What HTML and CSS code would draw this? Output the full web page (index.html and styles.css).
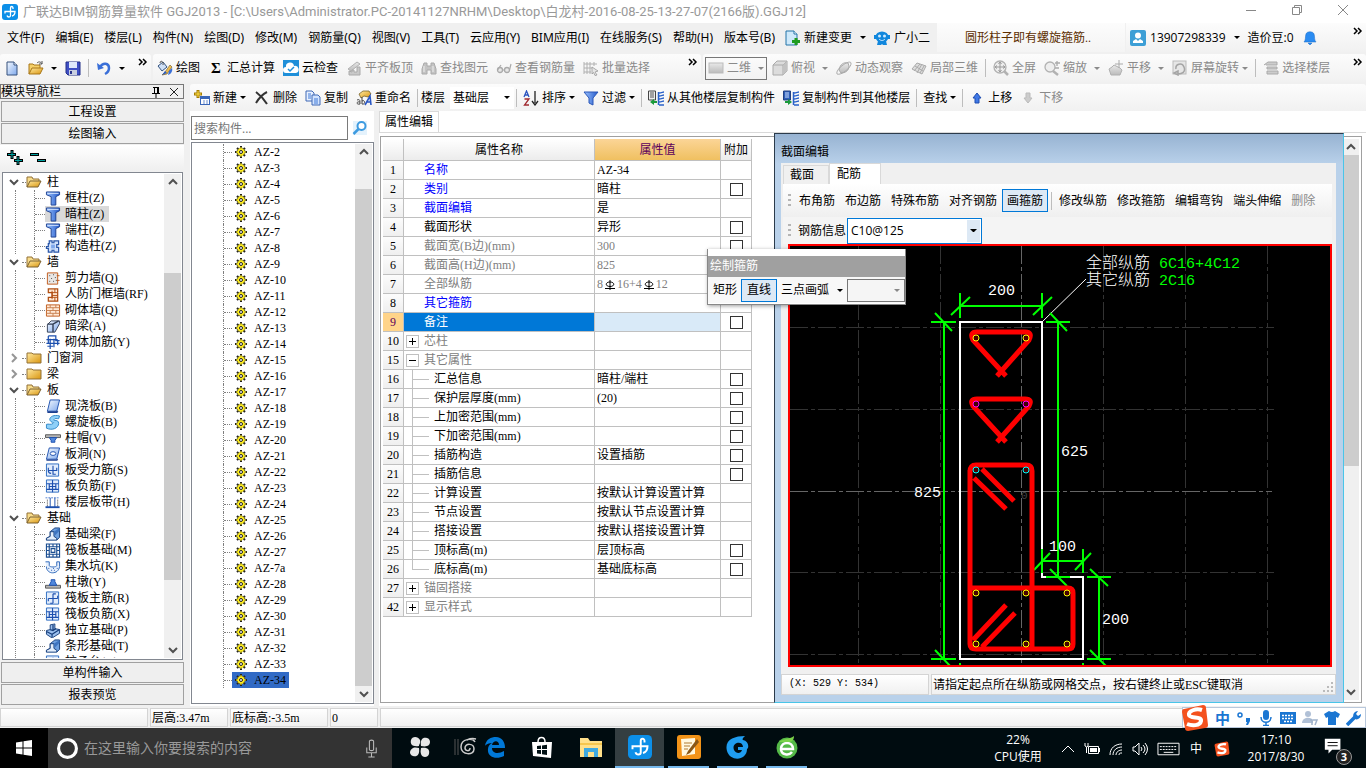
FILE: index.html
```html
<!DOCTYPE html>
<html lang="zh-CN">
<head>
  <meta charset="UTF-8">
  <title>广联达BIM钢筋算量软件 GGJ2013</title>
  <link rel="stylesheet" href="styles.css">
</head>
<body>

<!-- icon set, all on a 16x16 grid -->
<svg class="sprite" aria-hidden="true">
  <defs>
    <linearGradient id="gGold" x1="0" y1="0" x2="1" y2="1"><stop offset="0" stop-color="#ffe9a0"/><stop offset="1" stop-color="#d9950f"/></linearGradient>
    <linearGradient id="gBlue" x1="0" y1="0" x2="1" y2="1"><stop offset="0" stop-color="#f4f9ff"/><stop offset="1" stop-color="#7fa9ec"/></linearGradient>
    <linearGradient id="gGrey" x1="0" y1="0" x2="0" y2="1"><stop offset="0" stop-color="#e9e9e9"/><stop offset="1" stop-color="#bbb"/></linearGradient>
    <linearGradient id="gBlade" x1="0" y1="0" x2="1" y2="0"><stop offset="0" stop-color="#9cc4ff"/><stop offset="1" stop-color="#2358c9"/></linearGradient>
  </defs>
  <symbol id="logo" viewBox="0 0 16 16"><rect width="16" height="16" rx="3" fill="#0c8fe8"/><path d="M11 5V4c0-2-2.500-2-2.500 0v7.500c0 2-3 2-3.500 0M3 9.500v-2h10c0 2.500-1 4-3 4.500" fill="none" stroke="#fff" stroke-width="1.300"/></symbol>
  <symbol id="new" viewBox="0 0 16 16"><path d="M3 2h7l3 3v10H3z" fill="url(#gBlue)" stroke="#35507c"/><path d="M10 2v3h3" fill="#fff" stroke="#35507c"/></symbol>
  <symbol id="open" viewBox="0 0 16 16"><path d="M1 14V4h4l1 1h6v3" fill="#f5d069" stroke="#a87718"/><path d="M1 14l3-6h11l-3 6z" fill="url(#gGold)" stroke="#a87718"/><path d="M9 3c2-2 4-1 5 1M14 1v3h-3" fill="none" stroke="#555"/></symbol>
  <symbol id="save" viewBox="0 0 16 16"><path d="M1 2h14v13H3l-2-2z" fill="#3f4fc4" stroke="#222f87"/><path d="M4 2h8v6H4z" fill="#dfe8fb"/><path d="M4 10h8v5H4z" fill="#c9cfe0"/><path d="M5 11h2v3H5z" fill="#2a348c"/></symbol>
  <symbol id="undo" viewBox="0 0 16 16"><path d="M4 7c3-5 9-4 9 1 0 3-2 5-4 6" fill="none" stroke="#3a6fd8" stroke-width="2.500"/><path d="M1 3l1 7 6-2z" fill="#3a6fd8"/></symbol>
  <symbol id="draw" viewBox="0 0 16 16"><path d="M1 6l5-4 4 5-5 4z" fill="#cfe0f6" stroke="#33527f"/><path d="M3 3c0-3 4-2 3 2" fill="none" stroke="#555"/><path d="M13 5l-5 7-3 3 5-1 5-7z" fill="url(#gGold)" stroke="#6a531b" stroke-width=".6"/><path d="M8 11l-3 4 5-2z" fill="#2d5fc2"/><path d="M15 8c1 3-1 6-4 7l1-4z" fill="#3a6fd8"/></symbol>
  <symbol id="cloud" viewBox="0 0 16 16"><rect width="16" height="16" fill="#1e8fd9"/><path d="M3 13a3 3 0 010-6 4 4 0 018-1 3.500 3.500 0 012 7z" fill="#fff"/><path d="M5 9l2 2 4-4" fill="none" stroke="#1e8fd9" stroke-width="1.500"/></symbol>
  <symbol id="align" viewBox="0 0 16 16"><path d="M2 9l9-7 3 2-9 7z" fill="url(#gGrey)" stroke="#b2b2b2"/><path d="M3 11v4h11V7h-3v5H8v-2H6v2z" fill="#c9c9c9" stroke="#aaa"/></symbol>
  <symbol id="binoc" viewBox="0 0 16 16"><path d="M3 3h3v3h4V3h3l2 6v5h-5v-4H6v4H1V9z" fill="#c3c3c3" stroke="#aaa"/><path d="M3 6v6M12 6v6" stroke="#eee"/></symbol>
  <symbol id="glass" viewBox="0 0 16 16"><circle cx="4" cy="10" r="2.500" fill="#e8e8e8" stroke="#aaa" stroke-width="1.300"/><circle cx="11" cy="10" r="2.500" fill="#e8e8e8" stroke="#aaa" stroke-width="1.300"/><path d="M1.500 10L5 5M13.500 10L15 4M6.500 10h2" fill="none" stroke="#aaa" stroke-width="1.200"/></symbol>
  <symbol id="batch" viewBox="0 0 16 16"><path d="M1 2v12M4 2v12M7 2v12M1 4h13M1 8h8M1 12h7M11 2v4" stroke="#b0b0b0" fill="none"/><path d="M9 7l6 4-3 1 2 3-2 .5-1.500-3L9 14z" fill="#e6e6e6" stroke="#999" stroke-width=".8"/></symbol>
  <symbol id="rectg" viewBox="0 0 16 16"><rect x="1" y="3" width="14" height="10" fill="url(#gGrey)" stroke="#bbb"/></symbol>
  <symbol id="cube" viewBox="0 0 16 16"><path d="M1 5l4-4h10v10l-4 4H1z" fill="#dcdcdc" stroke="#aaa"/><path d="M1 5h10v10M11 5l4-4" fill="none" stroke="#aaa"/><path d="M11 5l4-4v10l-4 4z" fill="#c2c2c2"/></symbol>
  <symbol id="orbit" viewBox="0 0 16 16"><path d="M3 10c1-6 5-8 9-7l1 3c0 5-4 7-8 7z" fill="url(#gGrey)" stroke="#aaa"/><path d="M1 14C-1 9 14-1 15 3S5 16 1 14z" fill="none" stroke="#aaa"/></symbol>
  <symbol id="part3d" viewBox="0 0 16 16"><path d="M1 9l5-6 9 3-4 8z" fill="#ddd" stroke="#aaa"/><path d="M4 6l8 5M6 13l5-9M3 11l6-7M9 13l4-7" stroke="#aaa" fill="none"/></symbol>
  <symbol id="full" viewBox="0 0 16 16"><circle cx="7" cy="7" r="6" fill="#eee" stroke="#b2b2b2" stroke-width="1.300"/><path d="M7 2v10M2 7h10M5.500 4L7 2l1.500 2M5.500 10L7 12l1.500-2M4 5.500L2 7l2 1.500M10 5.500L12 7l-2 1.500" stroke="#999" fill="none"/><path d="M11 11l4 4" stroke="#b2b2b2" stroke-width="2.500"/></symbol>
  <symbol id="zoomi" viewBox="0 0 16 16"><circle cx="6" cy="7" r="5" fill="#eee" stroke="#b2b2b2" stroke-width="1.300"/><path d="M9 11l5 4" stroke="#b2b2b2" stroke-width="2.500"/><path d="M13 1v5M11 3h5M11 8h4" stroke="#aaa" stroke-width="1.300"/></symbol>
  <symbol id="pan" viewBox="0 0 16 16"><path d="M3 15l-2-6 3-2 2-2 6 3 2 2-2 5z" fill="url(#gGrey)" stroke="#b0b0b0"/><path d="M11 0v8M7 4h8" stroke="#aaa"/></symbol>
  <symbol id="rot" viewBox="0 0 16 16"><rect x="1" y="1" width="13" height="13" fill="#e6e6e6" stroke="#bbb"/><path d="M4 9c-1-5 6-7 8-2s-2 7-6 7M6 11v4l-4-2z" fill="none" stroke="#a5a5a5" stroke-width="1.500"/></symbol>
  <symbol id="floors" viewBox="0 0 16 16"><path d="M1 5l4-3h9v3H3M4 7h10v2H4zM4 11h11v3H4z" fill="#ccc" stroke="#aaa"/></symbol>
  <symbol id="change" viewBox="0 0 16 16"><path d="M2 1h8l3 3v11H2z" fill="#cfe9fa" stroke="#2474a8"/><path d="M10 1v3h3" fill="#fff" stroke="#2474a8"/><path d="M12 8v7M8 11.500h8" stroke="#1f9c1f" stroke-width="3"/></symbol>
  <symbol id="robot" viewBox="0 0 16 16"><ellipse cx="8" cy="7" rx="6.500" ry="5.500" fill="#1187dd"/><path d="M0 5h3v4H0zM13 5h3v4h-3zM4 11h8l1 4H9l-1-1-1 1H3z" fill="#1187dd"/><circle cx="5.500" cy="6" r="1.500" fill="#cfeaff"/><circle cx="10.500" cy="6" r="1.500" fill="#cfeaff"/><path d="M5 9c2 2 4 2 6 0" fill="none" stroke="#cfeaff"/></symbol>
  <symbol id="user" viewBox="0 0 16 16"><rect width="16" height="16" rx="2" fill="#3d9fd6"/><circle cx="8" cy="5.500" r="3" fill="#fff"/><path d="M3 13v-2l3-2 2 2 2-2 3 2v2z" fill="#fff"/></symbol>
  <symbol id="bell" viewBox="0 0 16 16"><path d="M2 12c2-2 1-5 2-8 1-3 7-3 8 0 1 3 0 6 2 8zM6 13h4l-2 2z" fill="#2b8cf2" stroke="#1768c4" stroke-width=".5"/></symbol>
  <symbol id="add" viewBox="0 0 16 16"><path d="M4 0v8M0 4h8" stroke="#a67c00" stroke-width="3"/><path d="M4 1v6M1 4h6" stroke="#ffe14a"/><rect x="6.500" y="6.500" width="9" height="8" fill="#fff" stroke="#3a66b8"/><path d="M7 8h8" stroke="#3a66b8" stroke-width="2"/><path d="M9 11h2M12 11h2M9 13h2M12 13h2" stroke="#6c8fd0"/></symbol>
  <symbol id="del" viewBox="0 0 16 16"><path d="M2 2c4 3 8 7 11 12M13 2C9 4 5 8 2 13" fill="none" stroke="#333" stroke-width="2"/></symbol>
  <symbol id="copy" viewBox="0 0 16 16"><path d="M1 1h6l2 2v8H1z" fill="#e7f0ff" stroke="#3f68b5"/><path d="M7 5h6l2 2v8H7z" fill="#d3e4ff" stroke="#3f68b5"/><path d="M3 4h3M3 6h3M3 8h3M9 9h4M9 11h4M9 13h4" stroke="#3f78d6"/></symbol>
  <symbol id="rename" viewBox="0 0 16 16"><path d="M3 4l4-3h6l2 3-3 3-4-1-3 2z" fill="url(#gGold)" stroke="#665018" stroke-width=".7"/><path d="M1 10c3-1 3 0 3 4-4 1-4-3 0-2M6 7v7c4 1 3-5 0-3" fill="none" stroke="#444" stroke-width="1"/><path d="M9 15l5-9 1 9M11 12h4" fill="none" stroke="#2a57c4" stroke-width="1.600"/></symbol>
  <symbol id="sort" viewBox="0 0 16 16"><path d="M1 7l2.500-6L6 7M2 5h3" fill="none" stroke="#2b54c0" stroke-width="1.300"/><path d="M1.500 9H6l-4.500 6H6" fill="none" stroke="#a02a30" stroke-width="1.300"/><path d="M12 1v12M9 11l3 4 3-4" fill="none" stroke="#222" stroke-width="1.300"/></symbol>
  <symbol id="filter" viewBox="0 0 16 16"><path d="M1 2h14L10 8v7l-4-2V8z" fill="url(#gBlade)" stroke="#2a57b8"/></symbol>
  <symbol id="cpfrom" viewBox="0 0 16 16"><path d="M.5 1h7v9h-7z" fill="#eee" stroke="#444"/><path d="M2 3h4M2 5h4M2 7h4" stroke="#555"/><path d="M11 3c2 0 4-1 5-1M11 6c2 0 4-1 5-1M11 9c2 0 4-1 5-1M11 12c2 0 4-1 5-1M11 15h5" stroke="#2a62c9" stroke-width="1.500" fill="none"/><path d="M10.500 2v13" stroke="#2a62c9" stroke-width="1.500"/><path d="M2 12l4-3v2h3v2H6v2z" fill="#1a9a3a"/></symbol>
  <symbol id="cpto" viewBox="0 0 16 16"><path d="M.5 1h7v9h-7z" fill="#2f5fb8" stroke="#223f80"/><path d="M2 3h4M2 5h4M2 7h4" stroke="#cfe0ff"/><path d="M11 3c2 0 4-1 5-1M11 6c2 0 4-1 5-1M11 9c2 0 4-1 5-1M11 12c2 0 4-1 5-1M11 15h5" stroke="#2a62c9" stroke-width="1.500" fill="none"/><path d="M10.500 2v13" stroke="#2a62c9" stroke-width="1.500"/><path d="M9 12L5 9v2H2v2h3v2z" fill="#1a9a3a"/></symbol>
  <symbol id="up" viewBox="0 0 16 16"><path d="M8 3l4 5h-2v5H6V8H4z" fill="#3f78e6" stroke="#1e4db0"/></symbol>
  <symbol id="down" viewBox="0 0 16 16"><path d="M8 13l4-5h-2V3H6v5H4z" fill="#ccc" stroke="#bbb"/></symbol>
  <symbol id="find" viewBox="0 0 16 16"><rect width="14" height="14" x="1" y="1" fill="#e4f2fc"/><circle cx="9.500" cy="6" r="4" fill="#fff" stroke="#3d9be0" stroke-width="2"/><path d="M6.500 9l-5 5" stroke="#3d9be0" stroke-width="2.500"/></symbol>
  <!-- tree -->
  <symbol id="fopen" viewBox="0 0 16 16"><path d="M1 13V3h5l1 2h6v3" fill="#f8dc8b" stroke="#927037"/><path d="M1 13l3-6h11l-3 6z" fill="url(#gGold)" stroke="#7b6130"/></symbol>
  <symbol id="fshut" viewBox="0 0 16 16"><path d="M1 3h5l1 1h8v9H1z" fill="url(#gGold)" stroke="#927037"/></symbol>
  <symbol id="col" viewBox="0 0 16 16"><path d="M1 1h14v3l-4 2v9H6V6L1 4z" fill="url(#gBlade)" stroke="#1c3f8f"/><path d="M2 2.500h12" stroke="#dbe9ff"/></symbol>
  <symbol id="gzz" viewBox="0 0 16 16"><path d="M4 2h3v2h2V2h5v4h-2v3h2v5H9v-2H7v2H3v-4H1V8h2V5h1z" fill="#cfe0fb" stroke="#2a56a8" stroke-width="1.300"/><path d="M6 6h4v4H6z" fill="#7fa9ec"/></symbol>
  <symbol id="wall" viewBox="0 0 16 16"><path d="M2 2h11v12H2z" fill="#e8e6e4" stroke="#c05a1a"/><path d="M4 5h1M8 4h1M6 8h1M10 7h1M4 11h1M8 11h1M11 10h1" stroke="#444"/><path d="M12 5h3M12 10h3" stroke="#c05a1a"/></symbol>
  <symbol id="rfw" viewBox="0 0 16 16"><path d="M3 2h10v13H3v-4h4V6H3z" fill="#ffe8d2" stroke="#b04c10" stroke-width="1.300"/><path d="M7 4v9M10 2v4M10 11v4M7 6h6M7 9h6M7 11h6" fill="none" stroke="#b04c10"/></symbol>
  <symbol id="brick" viewBox="0 0 16 16"><path d="M1 2h14v12H1z" fill="#ffe9d6" stroke="#c05a1a"/><path d="M1 5h14M1 8h14M1 11h14M5 2v3M11 2v3M8 5v3M5 8v3M11 8v3M8 11v3" stroke="#c98050"/></symbol>
  <symbol id="beam" viewBox="0 0 16 16"><path d="M2 6l4-4h9v3l-5 9H2z" fill="url(#gBlue)" stroke="#333f55"/><path d="M2 5.500h6V14M8 5.500L14 2" fill="none" stroke="#333f55" stroke-width="1.500"/></symbol>
  <symbol id="qjj" viewBox="0 0 16 16"><path d="M3 1h8v5h4M1 5h12M1 9h14M5 4v11M9 4v9M3 1v8M13 6v5M2 12h6" fill="none" stroke="#1c4fae" stroke-width="1.300"/></symbol>
  <symbol id="slab" viewBox="0 0 16 16"><path d="M5 1h10l-3 12H2z" fill="url(#gBlue)" stroke="#1c4fae"/><path d="M2 14h10l1-1" fill="none" stroke="#1c3f8f" stroke-width="2"/></symbol>
  <symbol id="spiral" viewBox="0 0 16 16"><path d="M15 1C8-1 3 3 5 6s5 1 3 3-5 0-7 1v4c6 3 13 0 13-5s-6-2-5-4 3-1 5-1z" fill="#8fd0f8" stroke="#2f86c8"/></symbol>
  <symbol id="cap" viewBox="0 0 16 16"><path d="M0 4h16v3H0z" fill="#b5b5b5" stroke="#555"/><path d="M4 7h8l-2 3v2H6v-2z" fill="#4f87dc" stroke="#1c4fae"/></symbol>
  <symbol id="hole" viewBox="0 0 16 16"><path d="M4 1h11l-3 12H1z" fill="url(#gBlue)" stroke="#1c4fae"/><path d="M1 14h11l1-1" fill="none" stroke="#1c3f8f" stroke-width="1.500"/><ellipse cx="8" cy="7" rx="3" ry="2" fill="#fff" stroke="#1c4fae"/></symbol>
  <symbol id="rebar" viewBox="0 0 16 16"><path d="M1 1h13v13H1z" fill="#e2edfc" stroke="#2a6ac0"/><path d="M3 5v3h9V5M3 8q0 3 3 3M8 3v9h3" fill="none" stroke="#1c4fae" stroke-width="1.200"/></symbol>
  <symbol id="rebar2" viewBox="0 0 16 16"><path d="M1 1h13v13H1z" fill="#e2edfc" stroke="#2a6ac0"/><path d="M1 5h13M1 11h13M7.500 1v13M4 5v6M11 5v6M4 8h7" fill="none" stroke="#1c4fae" stroke-width="1.200"/></symbol>
  <symbol id="rebar3" viewBox="0 0 16 16"><path d="M1 1h13v13H1z" fill="#e2edfc" stroke="#2a6ac0"/><path d="M3 8h10M8 3v10M8 3h3M8 13H5M3 8v3M13 8V5" fill="none" stroke="#1c4fae" stroke-width="1.200"/></symbol>
  <symbol id="band" viewBox="0 0 16 16"><path d="M0 13h15" stroke="#1c4fae" stroke-width="2"/><path d="M0 3h15" stroke="#4f7fd0" stroke-dasharray="2 1"/><path d="M5 3v10M10 3v10" stroke="#1c4fae"/><path d="M2 5v7M13 5v7" stroke="#333" stroke-dasharray="1 1"/></symbol>
  <symbol id="fbeam" viewBox="0 0 16 16"><path d="M1 14v-2l4-2V5l5-4h5v10l-3 3" fill="#6da0e0" stroke="#173f7c"/><path d="M1 12l4-2V5h4v5l3 2v2H1z" fill="#e4effc" stroke="#173f7c"/><path d="M9 5l6-4v3l-5 5z" fill="#3d74c0"/></symbol>
  <symbol id="raft" viewBox="0 0 16 16"><path d="M1 1h14v14H1zM4 4h8v8H4zM4 1v14M8 1v3M8 12v3M12 1v14M1 4h14M1 8h3M12 8h3M1 12h14M6 6h4v4H6z" fill="none" stroke="#1c4f92" stroke-width="1.200"/></symbol>
  <symbol id="pit" viewBox="0 0 16 16"><path d="M0 3h4v4c0 2 8 2 8 0V3h3v5c-1 9-14 9-14 0" fill="#e6f0fd" stroke="#2a64b8"/><path d="M3 10h1M6 12h1M9 12h1M12 10h1M8 10h1" stroke="#1c4fae"/></symbol>
  <symbol id="pier" viewBox="0 0 16 16"><path d="M0 11h16v3H0z" fill="#b5b5b5" stroke="#555"/><path d="M4 11l2-4V5h4v2l2 4z" fill="#4f87dc" stroke="#1c4fae"/></symbol>
  <symbol id="foot" viewBox="0 0 16 16"><path d="M1 8l4-1V2l5-1v5l5 1v4l-8 5-6-4z" fill="#9cc0ee" stroke="#173f7c"/><path d="M1 9l6 3 8-5M7 12v3M5 7l3 1 3-2M8 8V2" fill="none" stroke="#173f7c" stroke-width="1.300"/></symbol>
  <symbol id="gear" viewBox="0 0 12 12"><path d="M6 0v12M0 6h12M2 2l8 8M10 2l-8 8" stroke="#222" stroke-width="2"/><circle cx="6" cy="6" r="4" fill="#ffee1c" stroke="#333" stroke-dasharray="1.500 1"/><path d="M6 1v10M1 6h10" stroke="#ffee1c"/><circle cx="6" cy="6" r="1.500" fill="#fff" stroke="#222"/></symbol>
  <symbol id="plus2" viewBox="0 0 16 16"><path d="M5 0v9M0 4.500h9M11 6v9M7 10.500h9" stroke="#000" stroke-width="3"/><path d="M5 1v7M1 4.500h7M11 7v7M8 10.500h7" stroke="#00a0a0"/></symbol>
  <symbol id="minus2" viewBox="0 0 16 16"><path d="M0 4.500h9M7 10.500h9" stroke="#000" stroke-width="3"/><path d="M1 4.500h7M8 10.500h7" stroke="#00a0a0"/></symbol>
  <symbol id="pin" viewBox="0 0 16 16"><path d="M5 3.500h6M6.500 4v5M9.500 4v5M10.500 4v5M4 9.500h8M8 10v4" stroke="#000" fill="none"/></symbol>
  <symbol id="x" viewBox="0 0 16 16"><path d="M4 4l8 8M12 4l-8 8" stroke="#222" fill="none"/></symbol>
  <symbol id="chevu" viewBox="0 0 16 16"><path d="M4 10l4-4 4 4" fill="none" stroke="#505050" stroke-width="2"/></symbol>
  <symbol id="chevd" viewBox="0 0 16 16"><path d="M4 6l4 4 4-4" fill="none" stroke="#505050" stroke-width="2"/></symbol>
  <symbol id="more" viewBox="0 0 16 16"><path d="M4 5l3 3-3 3M8 5l3 3-3 3" fill="none" stroke="#000" stroke-width="1.500"/></symbol>
  <symbol id="sogou" viewBox="0 0 28 28"><path d="M3 5l19-4q3 0 3 3l2 17q0 3-3 3L7 27q-3 0-3-3L1 8q0-3 2-3z" fill="#f4511e"/><path d="M21 6C15 4 7 7 8 11s13 1 12 6-9 5-14 3" fill="none" stroke="#fff" stroke-width="4"/></symbol>
</svg>

<header class="titlebar">
  <svg class="i"><use href="#logo"/></svg>
  <h1>广联达BIM钢筋算量软件 GGJ2013 - [C:\Users\Administrator.PC-20141127NRHM\Desktop\白龙村-2016-08-25-13-27-07(2166版).GGJ12]</h1>
  <div class="winbtns">
    <button aria-label="最小化"><svg viewBox="0 0 12 12"><path d="M1 6.500h10"/></svg></button>
    <button aria-label="还原"><svg viewBox="0 0 12 12"><path d="M1.500 3.500h7v7h-7zM3.500 3.500v-2h7v7h-2"/></svg></button>
    <button aria-label="关闭"><svg viewBox="0 0 12 12"><path d="M1 1l10 10M11 1L1 11"/></svg></button>
  </div>
</header>

<nav class="menubar">
  <div class="menus" id="menus"></div>
  <div class="menu-tools">
    <button><svg class="i"><use href="#change"/></svg>新建变更<i class="caret wide"></i></button>
    <button><svg class="i"><use href="#robot"/></svg>广小二</button>
  </div>
  <a class="tip song" href="#">圆形柱子即有螺旋箍筋..</a>
  <div class="account">
    <button><svg class="i"><use href="#user"/></svg>13907298339<i class="caret wide"></i></button>
    <button>造价豆:0</button>
    <button aria-label="消息"><svg class="i"><use href="#bell"/></svg></button>
    <button class="more" aria-label="更多"><svg class="i"><use href="#more"/></svg></button>
  </div>
</nav>

<div class="toolbars">
  <div class="bar file">
    <button aria-label="新建"><svg class="i"><use href="#new"/></svg></button>
    <button aria-label="打开"><svg class="i"><use href="#open"/></svg><i class="caret wide"></i></button>
    <button aria-label="保存"><svg class="i"><use href="#save"/></svg></button>
    <i class="sep"></i>
    <button aria-label="撤销"><svg class="i"><use href="#undo"/></svg><i class="caret wide"></i></button>
    <button class="more" aria-label="更多"><svg class="i"><use href="#more"/></svg></button>
  </div>
  <div class="bar calc">
    <button><svg class="i"><use href="#draw"/></svg>绘图</button>
    <button><span class="i sigma">Σ</span>汇总计算</button>
    <button><svg class="i"><use href="#cloud"/></svg>云检查</button>
    <button disabled><svg class="i"><use href="#align"/></svg>平齐板顶</button>
    <button disabled><svg class="i"><use href="#binoc"/></svg>查找图元</button>
    <button disabled><svg class="i"><use href="#glass"/></svg>查看钢筋量</button>
    <button disabled><svg class="i"><use href="#batch"/></svg>批量选择</button>
    <button class="more" aria-label="更多"><svg class="i"><use href="#more"/></svg></button>
  </div>
  <div class="bar view">
    <button class="boxed" disabled><svg class="i"><use href="#rectg"/></svg>二维<i class="caret wide"></i></button>
    <button disabled><svg class="i"><use href="#cube"/></svg>俯视<i class="caret wide"></i></button>
    <button disabled><svg class="i"><use href="#orbit"/></svg>动态观察</button>
    <button disabled><svg class="i"><use href="#part3d"/></svg>局部三维</button>
    <i class="sep"></i>
    <button disabled><svg class="i"><use href="#full"/></svg>全屏</button>
    <button disabled><svg class="i"><use href="#zoomi"/></svg>缩放<i class="caret wide"></i></button>
    <button disabled><svg class="i"><use href="#pan"/></svg>平移<i class="caret wide"></i></button>
    <button disabled><svg class="i"><use href="#rot"/></svg>屏幕旋转<i class="caret"></i></button>
    <i class="sep"></i>
    <button disabled><svg class="i"><use href="#floors"/></svg>选择楼层</button>
    <button class="more" aria-label="更多"><svg class="i"><use href="#more"/></svg></button>
  </div>
</div>

<main>
  <aside class="nav">
    <div class="nav-title song">
      <h2>模块导航栏</h2>
      <button aria-label="固定"><svg class="i"><use href="#pin"/></svg></button>
      <button aria-label="关闭"><svg class="i"><use href="#x"/></svg></button>
    </div>
    <button class="nav-btn song">工程设置</button>
    <button class="nav-btn song">绘图输入</button>
    <div class="nav-tools">
      <button aria-label="全部展开"><svg class="i"><use href="#plus2"/></svg></button>
      <button aria-label="全部折叠"><svg class="i"><use href="#minus2"/></svg></button>
    </div>
    <div class="pane">
      <ul class="tree song" id="tree"></ul>
      <div class="scroll nav-scroll">
        <button aria-label="向上"><svg class="i"><use href="#chevu"/></svg></button>
        <div class="thumb"></div>
        <button aria-label="向下"><svg class="i"><use href="#chevd"/></svg></button>
      </div>
    </div>
    <button class="nav-btn song">单构件输入</button>
    <button class="nav-btn song">报表预览</button>
  </aside>

  <section class="work">
    <div class="bar edit">
      <button><svg class="i"><use href="#add"/></svg>新建<i class="caret"></i></button>
      <button><svg class="i"><use href="#del"/></svg>删除</button>
      <button><svg class="i"><use href="#copy"/></svg>复制</button>
      <button><svg class="i"><use href="#rename"/></svg>重命名</button>
      <i class="sep"></i>
      <label for="floor">楼层</label>
      <span class="combo floor"><select id="floor"><option>基础层</option></select><i class="caret"></i></span>
      <i class="sep"></i>
      <button><svg class="i"><use href="#sort"/></svg>排序<i class="caret"></i></button>
      <button><svg class="i"><use href="#filter"/></svg>过滤<i class="caret"></i></button>
      <i class="sep"></i>
      <button><svg class="i"><use href="#cpfrom"/></svg>从其他楼层复制构件</button>
      <button><svg class="i"><use href="#cpto"/></svg>复制构件到其他楼层</button>
      <i class="sep"></i>
      <button>查找<i class="caret"></i></button>
      <i class="sep"></i>
      <button><svg class="i"><use href="#up"/></svg>上移</button>
      <button disabled><svg class="i"><use href="#down"/></svg>下移</button>
    </div>

    <div class="panels">
      <section class="members">
        <div class="search">
          <input type="text" placeholder="搜索构件..." aria-label="搜索构件">
          <button aria-label="搜索"><svg class="i"><use href="#find"/></svg></button>
        </div>
        <div class="pane">
          <ul class="list song" id="members"></ul>
          <div class="scroll list-scroll">
            <button aria-label="向上"><svg class="i"><use href="#chevu"/></svg></button>
            <div class="thumb"></div>
            <button aria-label="向下"><svg class="i"><use href="#chevd"/></svg></button>
          </div>
        </div>
      </section>

      <section class="props">
        <div class="tabs"><button class="tab song">属性编辑</button></div>
        <div class="sheet">
          <table class="song">
            <thead><tr><th></th><th>属性名称</th><th class="on">属性值</th><th>附加</th></tr></thead>
            <tbody id="props"></tbody>
          </table>
          <div class="scroll sheet-scroll">
            <button aria-label="向上"><svg class="i"><use href="#chevu"/></svg></button>
            <div class="thumb"></div>
            <button aria-label="向下"><svg class="i"><use href="#chevd"/></svg></button>
          </div>
        </div>

        <!-- section editor window -->
        <div class="dialog">
          <h2>截面编辑</h2>
          <div class="dialog-body">
            <div class="dtabs song"><button>截面</button><button class="on">配筋</button></div>
            <div class="dbar">
              <i class="grip"></i>
              <button>布角筋</button><button>布边筋</button><button>特殊布筋</button><button>对齐钢筋</button>
              <button class="on">画箍筋</button><i class="sep"></i>
              <button>修改纵筋</button><button>修改箍筋</button><button>编辑弯钩</button><button>端头伸缩</button>
              <button disabled>删除</button>
            </div>
            <div class="dbar second">
              <i class="grip"></i>
              <label for="rebar-info">钢筋信息</label>
              <span class="combo info"><input id="rebar-info" type="text" value="C10@125"><button aria-label="展开"><i class="caret"></i></button></span>
            </div>
            <div class="cad">
              <svg viewBox="790 246 540 419" preserveAspectRatio="xMinYMin meet">
                <g class="grid">
                  <path d="M858.500 246v419M940.500 246v419M1103.500 246v419M1185.500 246v419M1267.500 246v419M790 327.500h484M790 409.500h484M790 572.500h484M790 654.500h484"/>
                  <path class="axis" d="M1021.500 246v419M790 491.500h482"/>
                </g>
                <text class="origin" x="1021" y="499">0</text>
                <path class="outline" d="M960 322h82v255h41v82H960z"/>
                <path class="leader" d="M1042 322l44-43"/>
                <g class="measure">
                  <path d="M960 306h82M960 293v25M1042 293v25M951 315l19-18M1033 315l19-18"/>
                  <path d="M944 322v337M931 322h25M931 659h25M935 313l17 18M935 650l17 18"/>
                  <path d="M1058 322v255M1046 322h24M1046 577h24M1050 313l17 18M1050 569l17 17"/>
                  <path d="M1042 561h41M1042 549v24M1083 549v24M1034 570l16-17M1075 570l16-17"/>
                  <path d="M1099 577v82M1087 577h24M1087 659h24M1090 569l18 17M1090 650l18 18M960 663v4M1083 663v4"/>
                </g>
                <g class="bars">
                  <path d="M1006 376l-33-36q-4-8 4-8h48q8 0 4 8l-32 36"/>
                  <path d="M1006 442l-33-36q-4-7 4-7h48q8 0 4 7l-32 36"/>
                  <path d="M976 465h50q6 0 6 6v178M970 470v174q0 5 6 5h92q5 0 5-5v-51q0-5-5-5H970M970 472q0-7 6-7M974 478l32 31M982 469l32 32M973 640l33-35M982 647l33-34"/>
                </g>
                <g class="nodes">
                  <g class="y"><circle cx="976" cy="338" r="3"/><circle cx="1026" cy="338" r="3"/><circle cx="976" cy="593" r="3"/><circle cx="1026" cy="593" r="3"/><circle cx="1067" cy="593" r="3"/><circle cx="976" cy="644" r="3"/><circle cx="1026" cy="644" r="3"/><circle cx="1067" cy="644" r="3"/></g>
                  <g class="m"><circle cx="976" cy="404" r="3"/><circle cx="1026" cy="404" r="3"/></g>
                  <g class="c"><circle cx="976" cy="470" r="3"/><circle cx="1026" cy="470" r="3"/></g>
                </g>
                <g class="num">
                  <text x="988" y="295">200</text><text x="1061" y="456">625</text><text x="914" y="497">825</text>
                  <text x="1049" y="551">100</text><text x="1102" y="624">200</text>
                  <text class="zh" x="1086" y="268">全部纵筋</text><text class="zh" x="1086" y="285">其它纵筋</text>
                  <text class="g" x="1159" y="268">6C16+4C12</text><text class="g" x="1159" y="285">2C16</text>
                </g>
              </svg>
            </div>
          </div>
          <div class="dstatus song"><span class="xy">(X: 529 Y: 534)</span><span class="hint">请指定起点所在纵筋或网格交点，按右键终止或ESC键取消<svg class="size-grip" viewBox="0 0 12 12"><path d="M9 2h2M9 6h2M5 6h2M9 10h2M5 10h2M1 10h2"/></svg></span></div>
        </div>

        <!-- floating stirrup toolbar -->
        <div class="float">
          <h2>绘制箍筋</h2>
          <div class="float-row">
            <button>矩形</button><button class="on">直线</button><button>三点画弧<i class="caret wide"></i></button>
            <span class="combo empty"><select aria-label="弧类型" disabled><option></option></select><i class="caret"></i></span>
          </div>
        </div>
      </section>
    </div>
  </section>
</main>

<footer class="status song">
  <span></span><span>层高:3.47m</span><span>底标高:-3.5m</span><span>0</span><span></span>
</footer>

<div class="taskbar">
  <button class="start" aria-label="开始"><svg viewBox="0 0 16 16"><path d="M0 2.500l6.500-1v6H0zM7.500 1.300L16 0v7.500H7.500zM0 8.500h6.500v6l-6.500-1zM7.500 8.500H16V16l-8.500-1.300z" fill="#fff"/></svg></button>
  <label class="ask"><svg viewBox="0 0 20 20"><circle cx="10" cy="10" r="8.500" fill="none" stroke="#fff" stroke-width="3"/></svg>
    <input type="text" placeholder="在这里输入你要搜索的内容">
    <svg viewBox="0 0 20 20"><path d="M8 3q0-1 2-1t2 1v8q0 1-2 1t-2-1zM5.500 9v5h9V9M10 14v4M7 18h6" fill="none" stroke="#bbb"/></svg></label>
  <div class="apps">
    <button aria-label="风扇"><svg viewBox="0 0 24 24"><g fill="#e8e8e8"><path d="M11 11C4 12 2 9 3 5s7-4 9 0c1 3-1 4-1 6z"/><path d="M13 11c-1-7 2-9 6-8s4 7 0 8c-3 1-4 0-6 0z"/><path d="M13 13c7-1 9 2 8 6s-7 4-8 0c-1-3 0-4 0-6z"/><path d="M11 13c1 7-2 9-6 8s-4-6 0-8c3-1 4 0 6 0z"/></g></svg></button>
    <button class="half" aria-label="G"><svg viewBox="0 0 24 24"><path d="M1 4v16M4 4v16" stroke="#555"/><path d="M21 7c-2-4-14-4-14 5 0 8 13 9 13 2 0-6-9-6-9-1 0 3 5 4 5 0M22 4c-4-1-7 0-9 1" fill="none" stroke="#ccc" stroke-width="1.500"/></svg></button>
    <button class="edge" aria-label="Edge"><svg viewBox="0 0 24 24"><path d="M2 11C3 4 8 2 13 2c6 0 9 5 9 11H9c0 6 7 6 12 3v5C13 25 4 22 5 14c0-3 2-5 4-6-5 0-7 3-7 3zM9 10h7c0-5-6-5-7 0z" fill="#0078d7"/></svg></button>
    <button aria-label="商店"><svg viewBox="0 0 24 24"><path d="M2 7h20l-1 16-18-2z" fill="#fff"/><path d="M8 7c0-6 7-6 7 0" fill="none" stroke="#fff" stroke-width="1.500"/><path d="M7 11l4-.5V14H7zM12 10.400l5-.6V14h-5zM7 15h4v4l-4-.5zM12 15h5v5l-5-.8z" fill="#001014"/></svg></button>
    <button aria-label="资源管理器"><svg viewBox="0 0 24 24"><path d="M1 3h8l2 3h12v16H1z" fill="#ffe08a"/><path d="M1 8h22v2H1z" fill="#f5c64e"/><path d="M5 13h14v9h-4v-5H9v5H5z" fill="#3fa9e0"/></svg></button>
    <button class="active" aria-label="GGJ"><svg viewBox="0 0 16 16"><use href="#logo"/></svg></button>
    <button class="run" aria-label="笔记"><svg viewBox="0 0 24 24"><rect width="24" height="24" rx="3" fill="#f29318"/><path d="M4 4l14-1v16l-13 2z" fill="#fff8e0"/><path d="M7 8h8M7 11h6M7 14h4" stroke="#b07a30"/><path d="M20 4l-9 12-2 4 4-2 9-11z" fill="#8a5716"/></svg></button>
    <button class="run" aria-label="广联达"><svg viewBox="0 0 24 24"><path d="M19 1c-2 2-3 3-2 4 4 1 6 4 5 8l-1 1c0 12-17 13-20 2C-2 5 8 1 19 1zM8 15c2 4 7 4 8 0h-4v-3h5c0-7-12-5-9 3z" fill="#1f9df0" fill-rule="evenodd"/></svg></button>
    <button class="run" aria-label="浏览器"><svg viewBox="0 0 24 24"><circle cx="12" cy="13" r="10.500" fill="#54b948"/><path d="M6 14h12c0-8-12-8-12 0 0 6 8 7 11 3" fill="none" stroke="#fff" stroke-width="2.500"/><path d="M4 7C8 3 14 5 19 1c0 5-3 6-6 6" fill="#7bd34a"/></svg></button>
  </div>
  <div class="tray">
    <div class="cpu">22%<br>CPU使用</div>
    <button aria-label="展开"><svg viewBox="0 0 16 16"><path d="M2 11l6-6 6 6"/></svg></button>
    <button aria-label="电源"><svg viewBox="0 0 16 16"><path d="M4.500 5.500h10v7h-10zM15.500 7v4M1 2v3q2 2 3 0V2M2.500 6v6"/><path d="M6 7h7v4H6z" fill="#fff" stroke="none"/></svg></button>
    <button aria-label="网络"><svg viewBox="0 0 16 16"><path d="M2 14C2 7 7 3 14 3M5 14c0-5 4-8 9-8M8 14c0-3 3-5 6-5M11 14c0-2 1-2 3-2"/></svg></button>
    <button aria-label="音量"><svg viewBox="0 0 16 16"><path d="M1 6h2l4-4v12L3 10H1zM9 6q2 2 0 4M11 4q4 4 0 8M13 2q5 6 0 12"/></svg></button>
    <button class="kb" aria-label="键盘"><svg viewBox="0 0 24 16"><path d="M1 2h22v12H1zM7 11.500h10"/><path d="M3 5.500h18M3 8.500h18" stroke-dasharray="2 1"/></svg></button>
    <button aria-label="输入法">中</button>
    <button class="sg" aria-label="搜狗"><svg viewBox="0 0 28 28"><use href="#sogou"/></svg></button>
    <div class="clock">17:10<br>2017/8/30</div>
    <button class="note" aria-label="通知"><svg viewBox="0 0 24 24"><path d="M2 2h17v12h-9l-4 4v-4H2z" fill="#fff" stroke="none"/><path d="M5 6h11M5 9.500h11" stroke="#000"/></svg><b>3</b></button>
  </div>
  <!-- input method strip -->
  <div class="ime">
    <svg class="big" viewBox="0 0 28 28"><use href="#sogou"/></svg>
    <b>中</b>
    <svg viewBox="0 0 16 16"><circle cx="4" cy="5" r="2" fill="none" stroke="#1b76d2" stroke-width="1.500"/><path d="M10 8h4v3l-2 4h-2l1-3h-1z" fill="#1b76d2"/></svg>
    <svg viewBox="0 0 16 16"><rect x="5" y="0" width="6" height="10" rx="3" fill="#1b76d2"/><path d="M3 7c0 7 10 7 10 0M8 12v4M5 15.500h6" fill="none" stroke="#1b76d2" stroke-width="1.500"/></svg>
    <svg viewBox="0 0 16 16"><path d="M0 2h16v12H0z" fill="#1b76d2"/><path d="M2 5.500h12M2 8.500h12M4 11.500h8" stroke="#fff" stroke-width="1.500" stroke-dasharray="2 1"/></svg>
    <svg viewBox="0 0 16 16"><circle cx="6" cy="4" r="3" fill="#b0c0d6"/><path d="M0 13c0-6 10-7 11-2v2z" fill="#b0c0d6"/><path d="M8 10h2v5M11 10h4l-2 5" fill="none" stroke="#9fb2cc" stroke-width="1.500"/></svg>
    <svg viewBox="0 0 16 16"><path d="M5 1q3 2 6 0l5 3-2 4-2-1v8H4V7L2 8 0 4z" fill="#1b76d2"/></svg>
    <svg viewBox="0 0 16 16"><path d="M1 15l8-8" stroke="#1b76d2" stroke-width="3.500"/><path d="M12 1C8 1 6 5 8 8s7 1 7-4l-3 2-2-2z" fill="#1b76d2"/></svg>
  </div>
</div>

<script>
  const icon = id => `<svg class="i"><use href="#${id}"/></svg>`;

  const menus = ["文件(F)", "编辑(E)", "楼层(L)", "构件(N)", "绘图(D)", "修改(M)", "钢筋量(Q)", "视图(V)",
    "工具(T)", "云应用(Y)", "BIM应用(I)", "在线服务(S)", "帮助(H)", "版本号(B)"];
  document.getElementById("menus").innerHTML = menus.map(m => `<button>${m}</button>`).join("");

  const tree = [
    ["柱", [["col", "框柱(Z)"], ["col", "暗柱(Z)"], ["col", "端柱(Z)"], ["gzz", "构造柱(Z)"]]],
    ["墙", [["wall", "剪力墙(Q)"], ["rfw", "人防门框墙(RF)"], ["brick", "砌体墙(Q)"], ["beam", "暗梁(A)"], ["qjj", "砌体加筋(Y)"]]],
    ["门窗洞", []],
    ["梁", []],
    ["板", [["slab", "现浇板(B)"], ["spiral", "螺旋板(B)"], ["cap", "柱帽(V)"], ["hole", "板洞(N)"], ["rebar", "板受力筋(S)"], ["rebar2", "板负筋(F)"], ["band", "楼层板带(H)"]]],
    ["基础", [["fbeam", "基础梁(F)"], ["raft", "筏板基础(M)"], ["pit", "集水坑(K)"], ["pier", "柱墩(Y)"], ["rebar3", "筏板主筋(R)"], ["rebar2", "筏板负筋(X)"], ["foot", "独立基础(P)"], ["fbeam", "条形基础(T)"], ["rebar", "桩承台(V)"]]]
  ];
  document.getElementById("tree").innerHTML = tree.map(([name, kids]) => `
    <li class="${kids.length ? "open" : "shut"}"><div class="row">${icon("chevd")}<i class="dots"></i>${icon(kids.length ? "fopen" : "fshut")}<span>${name}</span></div>
    <ul>${kids.map(([ic, t]) => `<li class="${t === "暗柱(Z)" ? "sel" : ""}"><i class="dots"></i><div class="leaf">${icon(ic)}<span>${t}</span></div></li>`).join("")}</ul></li>`).join("");

  const names = [];
  for (let n = 2; n <= 34; n++) {
    names.push("AZ-" + n);
    if (n === 27) names.push("AZ-7a");
  }
  document.getElementById("members").innerHTML = names.map(n =>
    `<li class="${n === "AZ-34" ? "sel" : ""}"><i class="dots"></i><div class="leaf">${icon("gear")}<span>${n}</span></div></li>`).join("");

  // no, name, value, checkbox, kind
  const rows = [
    [1, "名称", "AZ-34", 0, "key"], [2, "类别", "暗柱", 1, "key"], [3, "截面编辑", "是", 0, "key"],
    [4, "截面形状", "异形", 1, ""], [5, "截面宽(B边)(mm)", "300", 1, "dim"], [6, "截面高(H边)(mm)", "825", 1, "dim"],
    [7, "全部纵筋", "8#16+4#12", 1, "dim"], [8, "其它箍筋", "", 0, "key"], [9, "备注", "", 1, "cur"],
    [10, "芯柱", "", 0, "plus"], [15, "其它属性", "", 0, "minus"],
    [16, "汇总信息", "暗柱/端柱", 1, "sub"], [17, "保护层厚度(mm)", "(20)", 1, "sub"], [18, "上加密范围(mm)", "", 1, "sub"],
    [19, "下加密范围(mm)", "", 1, "sub"], [20, "插筋构造", "设置插筋", 1, "sub"], [21, "插筋信息", "", 1, "sub"],
    [22, "计算设置", "按默认计算设置计算", 0, "sub"], [23, "节点设置", "按默认节点设置计算", 0, "sub"],
    [24, "搭接设置", "按默认搭接设置计算", 0, "sub"], [25, "顶标高(m)", "层顶标高", 1, "sub"],
    [26, "底标高(m)", "基础底标高", 1, "sub last"], [27, "锚固搭接", "", 0, "plus"], [42, "显示样式", "", 0, "plus"]
  ];
  // # stands for the grade sign of the steel bar
  const steel = '<svg class="steel" viewBox="0 0 14 12"><path d="M7 1v10M2 9.500h10M7 3C2 3 2 7.500 7 7.500s5-4.500 0-4.500"/></svg>';
  document.getElementById("props").innerHTML = rows.map(([no, name, val, box, kind]) => `
    <tr class="${kind}"><th>${no}</th><td><i class="mark"></i><span>${name}</span></td>
    <td>${val.replaceAll("#", steel)}</td><td>${box ? `<input type="checkbox" aria-label="${name} 附加">` : ""}</td></tr>`).join("");
</script>
</body>
</html>
```
FILE: styles.css
```css
* {
  box-sizing: border-box;
}

html, body {
  height: 100%;
}

body {
  margin: 0;
  display: flex;
  flex-direction: column;
  overflow: hidden;
  background: #f0f0f0;
  color: #000;
  font: 12px/16px "Open Sans", "Noto Sans CJK SC", sans-serif;
  white-space: nowrap;
}

.song {
  font-family: "Liberation Serif", "Noto Sans CJK SC", serif;
}

button, input, select {
  font: inherit;
  color: inherit;
  margin: 0;
  padding: 0;
  border: 0;
  background: none;
  border-radius: 0;
}

button.song {
  font-family: "Liberation Serif", "Noto Sans CJK SC", serif;
}

h1, h2 {
  margin: 0;
  font-size: 12px;
  font-weight: normal;
}

ul {
  margin: 0;
  padding: 0;
  list-style: none;
}

.sprite {
  position: absolute;
  width: 0;
  height: 0;
}

.i {
  width: 16px;
  height: 16px;
  flex: none;
}

.caret {
  flex: none;
  border: 3px solid transparent;
  border-top-color: currentColor;
  border-bottom: 0;
}

.caret.wide {
  margin-left: 4px;
}

.sep {
  flex: none;
  width: 1px;
  height: 18px;
  margin: 0 3px;
  background: #bdbdbd;
}

/* title */
.titlebar {
  display: flex;
  align-items: center;
  flex: none;
  height: 23px;
  padding-left: 2px;
  gap: 5px;
  background: #fff;
  color: #999;
}

.titlebar h1 {
  flex: 1;
  overflow: hidden;
  font-family: Roboto, "Noto Sans CJK SC", sans-serif;
  font-size: 13px;
}

.winbtns {
  display: flex;
}

.winbtns button {
  width: 46px;
  height: 22px;
}

.winbtns svg {
  width: 12px;
  height: 12px;
  fill: none;
  stroke: #888;
}

/* menu */
.menubar {
  display: flex;
  flex: none;
  height: 31px;
  padding-bottom: 2px;
}

.menus, .menu-tools, .account {
  display: flex;
  align-items: center;
}

.menus {
  padding-left: 2px;
  gap: 1px;
  font-family: "Noto Sans", "Noto Sans CJK SC", sans-serif;
}

.menus button {
  padding: 0 5px;
}

.menu-tools button, .account button {
  display: flex;
  align-items: center;
  gap: 4px;
  padding: 0 4px;
}

.menu-tools {
  margin-right: 3px;
}

.tip {
  flex: 0 0 188px;
  padding: 7px 28px;
  background: linear-gradient(#fcfcfc, #f4f4f4);
  color: #5c2e00;
  text-decoration: none;
}

.account {
  flex: 1;
  margin-left: 1px;
  background: linear-gradient(#fcfcfc, #f1f1f1);
}

.bar .more, .account .more {
  margin-left: auto;
  padding: 0;
  align-self: flex-start;
}

/* toolbars */
.toolbars {
  display: flex;
  flex: none;
  gap: 2px;
  height: 30px;
  padding-bottom: 2px;
}

.bar {
  display: flex;
  align-items: center;
  border-radius: 3px;
  background: linear-gradient(#fcfcfc, #f1f1f1);
}

.bar button {
  display: flex;
  align-items: center;
  gap: 3px;
  padding: 0 4px;
}

.bar button:disabled, .dbar button:disabled {
  color: #8a8a8a;
}

.file {
  flex: 0 0 151px;
}

.calc {
  flex: 0 0 548px;
}

.view {
  flex: 1;
  padding-left: 2px;
}

.sigma {
  font: bold 15px/16px "Liberation Serif", serif;
}

.bar .boxed {
  height: 23px;
  margin-right: 1px;
  padding: 0 2px;
  border: 1px solid #777;
}

/* module navigator */
main {
  display: flex;
  flex: 1;
  min-height: 0;
}

.nav {
  display: flex;
  flex-direction: column;
  flex: 0 0 185px;
  gap: 1px;
  padding: 0 1px 1px 0;
}

.nav-title {
  display: flex;
  align-items: center;
  height: 15px;
  margin-bottom: 1px;
  border: 1px solid #777;
}

.nav-title h2 {
  flex: 1;
}

.nav-title button {
  width: 18px;
  height: 16px;
}

.nav-btn {
  flex: none;
  height: 21px;
  margin-left: 1px;
  background: #efefef;
  border: 1px solid #a0a0a0;
}

.nav-tools {
  flex: none;
  display: flex;
  align-items: center;
  gap: 7px;
  height: 26px;
  padding-left: 7px;
  background: linear-gradient(#fff, #efefef);
}

.nav-tools button, .nav-tools .i {
  display: block;
}

.pane {
  display: flex;
  flex: 1;
  min-height: 0;
  padding: 1px;
  border: 1px solid #828790;
  background: #fff;
}

.nav .pane {
  margin: 0 1px 1px 2px;
}

.tree, .list {
  flex: 1;
  overflow: hidden;
}

.tree .row {
  display: flex;
  align-items: center;
  height: 16px;
  padding-left: 2px;
}

.tree .row span {
  margin-left: 5px;
}

.tree .shut .row > .i:first-child {
  transform: rotate(-90deg);
  opacity: 0.6;
}

.row .dots {
  width: 4px;
  border-top: 1px dotted #808080;
}

.tree > li > ul {
  margin-left: 11px;
  padding-left: 18px;
  border-left: 1px dotted #808080;
}

.tree ul li, .list li {
  display: flex;
  align-items: center;
  height: 16px;
  border-left: 1px dotted #808080;
}

.tree ul li .dots {
  width: 10px;
  border-top: 1px dotted #808080;
}

.leaf {
  display: flex;
  align-items: center;
  height: 16px;
  gap: 4px;
  padding-right: 5px;
}

.tree .sel .leaf {
  background: #d9d9d9;
}

.tree .leaf .i {
  height: 15px;
}

/* scrollbars */
.scroll {
  display: flex;
  flex-direction: column;
  flex: none;
  width: 17px;
  background: #f0f0f0;
}

.scroll button {
  flex: none;
  height: 16px;
}

.scroll::before, .scroll::after {
  content: "";
}

.scroll button:first-of-type {
  order: -1;
}

.scroll button:last-of-type {
  order: 1;
}

.thumb {
  background: #cdcdcd;
}

.nav-scroll::before { flex: 83; }
.nav-scroll .thumb { flex: 307; }
.nav-scroll::after { flex: 62; }
.list-scroll::before { flex: 29; }
.list-scroll .thumb { flex: 496; }
.sheet-scroll .thumb { flex: 310; }
.sheet-scroll::after { flex: 218; }

/* work area */
.work {
  display: flex;
  flex-direction: column;
  flex: 1;
  min-width: 0;
  padding-left: 5px;
}

.edit {
  flex: none;
  height: 27px;
}

.edit .sep {
  margin: 0 2px;
}

.edit label {
  padding: 0 5px 0 1px;
}

.combo {
  display: flex;
  align-items: center;
  background: #fff;
}

.combo select, .combo input {
  flex: 1;
  min-width: 0;
  appearance: none;
  outline: 0;
}

.floor {
  width: 64px;
  height: 22px;
  padding: 0 4px 0 3px;
}

.panels {
  display: flex;
  flex: 1;
  min-height: 0;
}

.members {
  display: flex;
  flex-direction: column;
  flex: 0 0 184px;
  padding: 5px 0 2px 1px;
  background: #fff;
}

.search {
  display: flex;
  gap: 4px;
  margin-bottom: 2px;
}

.search input {
  width: 157px;
  height: 24px;
  padding: 0 2px;
  border: 1px solid #7a7a7a;
}

.search input::placeholder {
  color: #777;
}

.search button {
  display: flex;
  align-items: center;
}

.list li {
  margin-left: 30px;
}

.list .dots {
  width: 8px;
  border-top: 1px dotted #808080;
}

.list .leaf {
  gap: 7px;
  padding: 0 3px;
}

.list .leaf .i {
  width: 12px;
  height: 12px;
}

.list .sel .leaf {
  background: #316ac5;
}

/* property sheet */
.props {
  position: relative;
  display: flex;
  flex-direction: column;
  flex: 1;
  min-width: 0;
  margin-left: 5px;
  padding-bottom: 3px;
  background: #fff;
}

.tabs {
  display: flex;
  height: 22px;
  border-bottom: 1px solid #d9d9d9;
}

.tab {
  width: 60px;
  background: #fff;
  border: 1px solid #d9d9d9;
  border-bottom: 0;
}

.sheet {
  display: flex;
  justify-content: space-between;
  align-items: stretch;
  flex: 1;
  min-height: 0;
  margin: 3px 4px 0 1px;
  padding: 2px;
  border: 1px solid #a0a0a0;
  background: #fff;
}

.sheet table {
  align-self: flex-start;
  width: 369px;
  table-layout: fixed;
  border-collapse: separate;
  border-spacing: 0;
}

.sheet th, .sheet td {
  height: 19px;
  padding: 0;
  font-weight: normal;
  text-align: left;
  line-height: 16px;
  border-right: 1px solid #c0c0c0;
  border-bottom: 1px solid #c0c0c0;
}

.sheet thead th {
  height: 22px;
  text-align: center;
  background: linear-gradient(#fff, #ececec);
}

.sheet thead th:nth-child(1) { width: 21px; }
.sheet thead th:nth-child(3) { width: 126px; }
.sheet thead th:nth-child(4) { width: 31px; }

.sheet thead .on {
  background: linear-gradient(#fbd597, #f0c060);
  color: #5c005c;
}

.sheet tbody th {
  text-align: center;
  background: linear-gradient(#fcfcfc, #efefef);
}

.sheet td:nth-child(2) {
  padding-left: 20px;
}

.sheet td:nth-child(3) {
  padding-left: 2px;
}

.sheet td:nth-child(4) {
  text-align: center;
}

.sheet input {
  display: block;
  appearance: none;
  width: 13px;
  height: 13px;
  margin: 0 auto;
  border: 1px solid #333;
  background: #fff;
}

.key td:nth-child(2) {
  color: #00f;
}

.dim td, .plus td, .minus td {
  color: #808080;
}

.sheet .cur th {
  background: #ffd48a;
  color: #5c005c;
}

.cur td:nth-child(2) {
  background: #0078d7;
  color: #fff;
}

.cur td:nth-child(3) {
  background: #d9eaf8;
}

.sheet .plus td:nth-child(2), .sheet .minus td:nth-child(2) {
  padding-left: 2px;
}

.plus .mark, .minus .mark {
  display: inline-block;
  vertical-align: middle;
  width: 13px;
  height: 13px;
  margin: -2px 5px 0 0;
  border: 1px solid #c0c0c0;
  background: linear-gradient(#000, #000) center / 7px 1px no-repeat, linear-gradient(#000, #000) center / 1px 7px no-repeat;
}

.minus .mark {
  background: linear-gradient(#000, #000) center / 7px 1px no-repeat;
}

.sheet .sub td:nth-child(2) {
  padding-left: 30px;
  background: linear-gradient(#c0c0c0, #c0c0c0) 8px 9px / 17px 1px no-repeat, linear-gradient(#c0c0c0, #c0c0c0) 8px 0 / 1px 100% no-repeat;
}

.sheet .last td:nth-child(2) {
  background-size: 17px 1px, 1px 10px;
}

.steel {
  width: 14px;
  height: 12px;
  vertical-align: middle;
  fill: none;
  stroke: #000;
}

/* section editor */
.dialog {
  position: absolute;
  top: 22px;
  right: 22px;
  bottom: 3px;
  left: 395px;
  display: flex;
  flex-direction: column;
  padding: 0 7px 7px 6px;
  border: 1px solid #2b3b4b;
  border-right-color: #49c5e8;
  border-bottom-color: #49c5e8;
  background: linear-gradient(#97b3d2, #b9d1ea 30px);
}

.dialog h2 {
  height: 29px;
  line-height: 36px;
}

.dialog-body {
  display: flex;
  flex-direction: column;
  flex: 1;
  min-height: 0;
  padding: 0 4px 4px 2px;
  background: #f0f0f0;
}

.dtabs {
  display: flex;
  align-items: flex-end;
  height: 21px;
}

.dtabs button {
  width: 46px;
  height: 19px;
  padding-right: 8px;
  border: 1px solid #d9d9d9;
  border-bottom: 0;
}

.dtabs .on {
  width: 52px;
  height: 21px;
  padding-right: 12px;
  background: #fff;
}

.dbar {
  display: flex;
  align-items: center;
  flex: none;
  height: 33px;
  padding-left: 2px;
  background: linear-gradient(#fff, #efefef);
}

.dbar.second {
  height: 27px;
  background: #f4f4f4;
}

.dbar button {
  padding: 0 5px;
}

.dbar .on, .float .on {
  height: 23px;
  padding: 0 4px;
  border: 1px solid #0078d7;
  background: #dde9f5;
}

.dbar .sep {
  margin-right: 2px;
}

.grip {
  width: 3px;
  height: 14px;
  margin: 0 3px;
  background: repeating-linear-gradient(#b5b5b5 0 2px, transparent 2px 5px);
}

.second label {
  padding-left: 4px;
}

.info {
  width: 135px;
  height: 26px;
  margin-left: 1px;
  padding: 1px;
  border: 1px solid #0078d7;
}

.combo.info button {
  width: 13px;
  height: 22px;
  padding: 0 3px;
  background: #dde9f5;
}

.combo.info input {
  padding-left: 2px;
}

.info .caret {
  display: block;
}

.cad {
  flex: 1;
  min-height: 0;
  margin-left: 5px;
  border: 2px solid #f00;
  background: #000;
  overflow: hidden;
}

.cad svg {
  display: block;
  width: 100%;
  height: 100%;
  fill: none;
}

.grid path {
  stroke: #333;
  stroke-dasharray: 18 3 4 3;
}

.grid .axis {
  stroke: #666;
}

.outline {
  stroke: #fff;
  stroke-width: 2;
}

.leader {
  stroke: #fff;
}

.measure {
  stroke: #0f0;
  stroke-width: 2;
}

.bars {
  stroke: #f00;
  stroke-width: 5;
}

.nodes circle {
  fill: #400;
}

.y { stroke: #ff0; }
.m { stroke: #f0f; }
.c { stroke: #0ff; }

.num text, .origin {
  fill: #fff;
  font: 15px "Liberation Mono", monospace;
}

.num .g {
  fill: #0f0;
}

.num .zh {
  font: 300 16px "Noto Sans CJK SC", sans-serif;
}

.cad .origin {
  fill: #444;
  font-size: 11px;
}

.dstatus {
  display: flex;
  gap: 2px;
  height: 24px;
  padding-top: 3px;
  background: #f0f0f0;
}

.dstatus span {
  padding: 1px;
  border: 1px solid #d4d4d4;
  background: linear-gradient(#fff, #f0f0f0);
}

.dstatus .xy {
  width: 148px;
  padding-left: 7px;
  font-family: "Liberation Mono", monospace;
  font-size: 10px;
}

.dstatus .hint {
  display: flex;
  justify-content: space-between;
  align-items: flex-end;
  flex: 1;
}

.size-grip {
  width: 12px;
  height: 12px;
  stroke: #bbb;
  stroke-width: 2;
}

/* stirrup toolbar */
.float {
  position: absolute;
  top: 138px;
  left: 328px;
  width: 199px;
  padding: 7px 0 1px;
  border: 1px solid #888;
  border-top: 0;
  background: #fff;
  box-shadow: 1px 1px 4px rgba(0, 0, 0, 0.4);
}

.float h2 {
  height: 21px;
  padding: 2px;
  background: #a0a0a0;
  color: #fff;
}

.float-row {
  display: flex;
  align-items: center;
  height: 26px;
  padding-left: 1px;
  background: #f8f8f8;
}

.float button {
  display: flex;
  align-items: center;
  gap: 4px;
  padding: 0 4px;
}

.float .on {
  padding: 0 5px;
}

.empty {
  flex: 1;
  height: 23px;
  padding: 0 4px;
  border: 1px solid #777;
  background: #f5f5f5;
  color: #888;
}

/* status bar */
.status {
  display: flex;
  flex: none;
  gap: 2px;
  height: 22px;
  padding: 2px 0 1px;
}

.status span {
  padding: 0 1px;
  line-height: 18px;
  border: 1px solid #d4d4d4;
  background: linear-gradient(#fff, #f0f0f0);
}

.status span:nth-child(1) { width: 148px; }
.status span:nth-child(2) { width: 78px; }
.status span:nth-child(3) { width: 98px; }
.status span:nth-child(4) { width: 48px; }
.status span:nth-child(5) { flex: 1; }

/* taskbar */
.taskbar {
  position: relative;
  display: flex;
  flex: none;
  height: 40px;
  background: #000c10;
  color: #fff;
}

.start {
  width: 48px;
  background: #000;
}

.start svg {
  width: 16px;
  height: 16px;
  vertical-align: middle;
}

.ask {
  display: flex;
  align-items: center;
  gap: 6px;
  width: 344px;
  padding: 0 10px 0 9px;
  background: #333;
}

.ask svg {
  flex: none;
  width: 21px;
  height: 21px;
}

.ask input {
  flex: 1;
  font-size: 14px;
  line-height: 20px;
}

.ask input::placeholder {
  color: #999;
}

.apps {
  display: flex;
  flex: 1;
  padding-left: 3px;
}

.apps button {
  width: 49px;
  border-bottom: 2px solid transparent;
}

.apps svg {
  width: 24px;
  height: 24px;
  vertical-align: middle;
}

.apps button:first-child {
  margin-right: 9px;
}

.apps .half {
  width: 26px;
}

.apps .edge {
  width: 32px;
  margin-right: 6px;
}

.apps .active {
  background: #343e41;
  border-bottom-color: #76b9ed;
}

.apps .run {
  width: 41px;
  margin: 0 4px;
  border-bottom-color: #76b9ed;
}

.tray {
  display: flex;
  align-items: center;
  line-height: 17px;
  text-align: center;
}

.tray > button {
  width: 24px;
}

.tray svg {
  width: 16px;
  height: 16px;
  fill: none;
  stroke: #fff;
  vertical-align: middle;
}

.tray use {
  stroke: none;
}

.cpu {
  width: 60px;
  margin-right: 8px;
}

.clock {
  width: 72px;
  margin: 0 4px;
}

.tray .kb {
  width: 32px;
}

.kb svg {
  width: 23px;
}

.tray .sg {
  width: 28px;
}

.tray .note {
  position: relative;
  width: 36px;
  margin-right: 14px;
}

.note svg {
  width: 22px;
  height: 22px;
}

.note b {
  position: absolute;
  right: 0;
  bottom: -6px;
  width: 16px;
  height: 16px;
  border: 1px solid #999;
  border-radius: 50%;
  background: #222;
  font-size: 11px;
  line-height: 14px;
}

.ime {
  position: absolute;
  right: 0;
  bottom: 40px;
  display: flex;
  align-items: center;
  gap: 6px;
  width: 184px;
  height: 21px;
  padding-right: 2px;
  background: #fff;
  border: 1px solid #b8c8dc;
  color: #1b76d2;
  font-size: 15px;
}

.ime svg {
  flex: none;
  width: 16px;
  height: 16px;
}

.ime .big {
  width: 28px;
  height: 28px;
  margin-left: -2px;
}
```
